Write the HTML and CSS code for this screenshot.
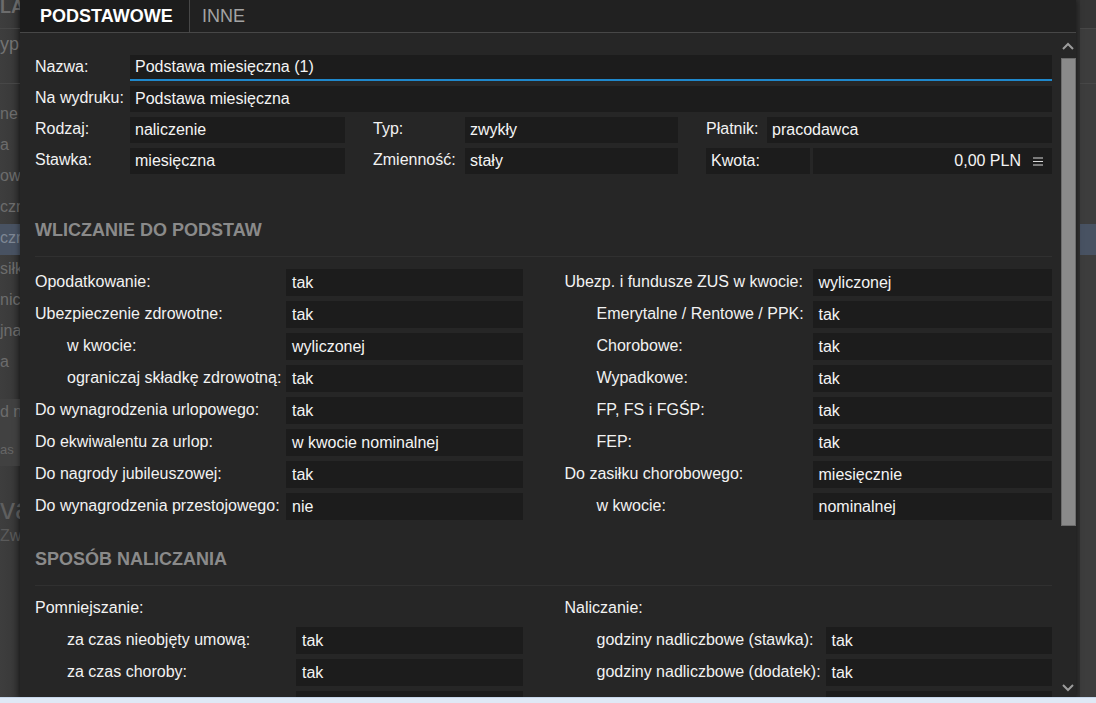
FILE: index.html
```html
<!DOCTYPE html>
<html lang="pl">
<head>
<meta charset="utf-8">
<title>Podstawa miesięczna</title>
<link rel="stylesheet" href="styles.css">
</head>
<body>
<div class="screen">
  <div class="main">
    <aside class="bg bg-left">
      <div class="b-head">LA</div>
      <div class="b-search">ypu</div>
      <div class="b-gap"></div>
      <div class="b-row">ne</div>
      <div class="b-row">a</div>
      <div class="b-row">owa</div>
      <div class="b-row">czn</div>
      <div class="b-row sel">czn</div>
      <div class="b-row">siłk</div>
      <div class="b-row">nic:</div>
      <div class="b-row">jna</div>
      <div class="b-row">a</div>
      <div class="b-gap2"></div>
      <div class="b-box"><div class="b-l1">d n</div><div class="b-l2">as</div></div>
      <div class="b-big">va</div>
      <div class="b-sub">Zw</div>
    </aside>

    <section class="dialog">
      <nav class="tabs">
        <div class="tab active">PODSTAWOWE</div>
        <div class="tab">INNE</div>
      </nav>
      <div class="body">
        <div class="content">
          <div class="top">
            <div class="frow">
              <span class="lbl l95">Nazwa:</span><span class="field focus">Podstawa miesięczna (1)</span>
            </div>
            <div class="frow">
              <span class="lbl l95">Na wydruku:</span><span class="field">Podstawa miesięczna</span>
            </div>
            <div class="trow">
              <div class="grp"><span class="lbl l95">Rodzaj:</span><span class="field">naliczenie</span></div>
              <div class="grp"><span class="lbl l92">Typ:</span><span class="field">zwykły</span></div>
              <div class="grp"><span class="lbl l61">Płatnik:</span><span class="field">pracodawca</span></div>
            </div>
            <div class="trow">
              <div class="grp"><span class="lbl l95">Stawka:</span><span class="field">miesięczna</span></div>
              <div class="grp"><span class="lbl l92">Zmienność:</span><span class="field">stały</span></div>
              <div class="grp kwota"><span class="field lblbox">Kwota:</span><span class="field amount">0,00 PLN<svg class="menu" width="10" height="9" viewBox="0 0 10 9"><path d="M0 1h10M0 4.5h10M0 8h10" stroke="#d8d8d8" stroke-width="1.2"/></svg></span></div>
            </div>
          </div>

          <h2 class="sec-head first">WLICZANIE DO PODSTAW</h2>
          <div class="cols s1">
            <div class="col left">
              <div class="srow"><span class="lbl">Opodatkowanie:</span><span class="field">tak</span></div>
              <div class="srow"><span class="lbl">Ubezpieczenie zdrowotne:</span><span class="field">tak</span></div>
              <div class="srow"><span class="lbl ind">w kwocie:</span><span class="field">wyliczonej</span></div>
              <div class="srow"><span class="lbl ind">ograniczaj składkę zdrowotną:</span><span class="field">tak</span></div>
              <div class="srow"><span class="lbl">Do wynagrodzenia urlopowego:</span><span class="field">tak</span></div>
              <div class="srow"><span class="lbl">Do ekwiwalentu za urlop:</span><span class="field">w kwocie nominalnej</span></div>
              <div class="srow"><span class="lbl">Do nagrody jubileuszowej:</span><span class="field">tak</span></div>
              <div class="srow"><span class="lbl">Do wynagrodzenia przestojowego:</span><span class="field">nie</span></div>
            </div>
            <div class="col right">
              <div class="srow"><span class="lbl">Ubezp. i fundusze ZUS w kwocie:</span><span class="field">wyliczonej</span></div>
              <div class="srow"><span class="lbl ind">Emerytalne / Rentowe / PPK:</span><span class="field">tak</span></div>
              <div class="srow"><span class="lbl ind">Chorobowe:</span><span class="field">tak</span></div>
              <div class="srow"><span class="lbl ind">Wypadkowe:</span><span class="field">tak</span></div>
              <div class="srow"><span class="lbl ind">FP, FS i FGŚP:</span><span class="field">tak</span></div>
              <div class="srow"><span class="lbl ind">FEP:</span><span class="field">tak</span></div>
              <div class="srow"><span class="lbl">Do zasiłku chorobowego:</span><span class="field">miesięcznie</span></div>
              <div class="srow"><span class="lbl ind">w kwocie:</span><span class="field">nominalnej</span></div>
            </div>
          </div>

          <h2 class="sec-head second">SPOSÓB NALICZANIA</h2>
          <div class="cols s2">
            <div class="col left">
              <div class="srow"><span class="lbl">Pomniejszanie:</span></div>
              <div class="srow"><span class="lbl ind">za czas nieobjęty umową:</span><span class="field">tak</span></div>
              <div class="srow"><span class="lbl ind">za czas choroby:</span><span class="field">tak</span></div>
              <div class="srow"><span class="lbl ind">za czas urlopu:</span><span class="field">tak</span></div>
            </div>
            <div class="col right">
              <div class="srow"><span class="lbl">Naliczanie:</span></div>
              <div class="srow"><span class="lbl ind">godziny nadliczbowe (stawka):</span><span class="field">tak</span></div>
              <div class="srow"><span class="lbl ind">godziny nadliczbowe (dodatek):</span><span class="field">tak</span></div>
              <div class="srow"><span class="lbl ind">godziny nocne:</span><span class="field">tak</span></div>
            </div>
          </div>
        </div>

        <div class="scrollbar">
          <div class="sb-btn up"><svg width="12" height="8" viewBox="0 0 12 8"><path d="M1 7L6 2l5 5" fill="none" stroke="#9c9c9c" stroke-width="2"/></svg></div>
          <div class="thumb"></div>
          <div class="sb-space"></div>
          <div class="sb-btn down"><svg width="12" height="8" viewBox="0 0 12 8"><path d="M1 1l5 5 5-5" fill="none" stroke="#9c9c9c" stroke-width="2"/></svg></div>
        </div>
      </div>
    </section>

    <aside class="bg bg-right">
      <div class="r-edge"></div>
      <div class="r-main">
        <div class="b-head"></div>
        <div class="b-search"></div>
        <div class="b-gap"></div>
        <div class="b-row"></div>
        <div class="b-row"></div>
        <div class="b-row"></div>
        <div class="b-row"></div>
        <div class="b-row sel"></div>
        <div class="b-row"></div>
        <div class="b-row"></div>
        <div class="b-row"></div>
        <div class="b-row"></div>
      </div>
    </aside>
  </div>
  <div class="taskbar"></div>
</div>
</body>
</html>
```

FILE: styles.css
```css
* { box-sizing: border-box; }
html, body { margin: 0; padding: 0; }
body {
  width: 1096px;
  height: 703px;
  overflow: hidden;
  background: #3a3a3a;
  font-family: "Liberation Sans", Arial, sans-serif;
  font-size: 16px;
  color: #f2f2f2;
}
.screen { display: flex; flex-direction: column; height: 703px; }
.main { display: flex; height: 697px; overflow: hidden; }
.taskbar { height: 6px; background: #dfe9f6; border-top: 1px solid #c6d6ea; }

/* background application peeking out */
.bg {
  flex: 0 0 20px;
  overflow: hidden;
  background: #3c3c3c;
  color: #6c6c6c;
  white-space: nowrap;
  font-size: 16px;
}
.bg-left { background: linear-gradient(to right, #3e3e3e 0, #3a3a3a 12px, #2e2e2e 20px); }
.b-head { height: 31px; line-height: 16px; font-weight: bold; font-size: 18px; border-bottom: 1px solid #474747; margin-top: -2px; padding-top: 1px; }
.b-search { height: 55px; line-height: 26px; padding-top: 2px; color: #737373; border-bottom: 1px solid #474747; font-size: 18px; }
.b-gap { height: 16px; }
.b-row { height: 31px; line-height: 28px; }
.b-row.sel { background: #485262; color: #7e8794; }
.b-gap2 { height: 20px; }
.b-box { height: 67px; background: #414141; padding-top: 4px; }
.b-l1 { line-height: 18px; }
.b-l2 { font-size: 13px; line-height: 18px; margin-top: 20px; color: #666; }
.b-big { font-size: 30px; line-height: 36px; margin-top: 25px; color: #5f5f5f; }
.b-sub { line-height: 18px; color: #5a5a5a; }

.bg-right { display: flex; background: #3d3d3d; }
.r-edge { flex: 0 0 4px; background: #303030; }
.r-main { flex: 1; }
.bg-right .b-head { background: #353535; }

/* dialog */
.dialog {
  flex: 0 0 1056px;
  display: flex;
  flex-direction: column;
  background: #262626;
  box-shadow: 0 0 6px rgba(0,0,0,.55);
  position: relative;
}
.tabs {
  height: 33px;
  display: flex;
  flex: none;
  background: #212121;
  border-bottom: 1px solid #474747;
}
.tab {
  font-size: 18px;
  line-height: 32px;
  color: #a3a3a3;
  padding: 0 12px;
}
.tab.active {
  width: 170px;
  padding-left: 20px;
  font-weight: bold;
  color: #ffffff;
  background: #1c1c1c;
  border-right: 1px solid #474747;
}
.body { flex: 1; display: flex; min-height: 0; }
.content { flex: 1; padding: 22px 8px 0 15px; overflow: hidden; }

.lbl { flex: none; white-space: nowrap; padding-bottom: 2px; }
.field {
  flex: 1;
  min-width: 0;
  height: 26px;
  background: #1c1c1c;
  padding: 0 5px;
  display: flex;
  align-items: center;
  white-space: nowrap;
  overflow: hidden;
  color: #f4f4f4;
}
.field.focus { border-bottom: 2px solid #1f88cc; }

.top { display: flex; flex-direction: column; gap: 5px; }
.frow { display: flex; align-items: center; height: 26px; }
.trow {
  display: grid;
  grid-template-columns: 310px 305px 1fr;
  column-gap: 28px;
  height: 26px;
}
.grp { display: flex; align-items: center; }
.l95 { width: 95px; }
.l92 { width: 92px; }
.l61 { width: 61px; }
.kwota { gap: 3px; }
.lblbox { flex: 0 0 104px; }
.amount { justify-content: flex-end; padding-right: 9px; }
.menu { margin-left: 12px; flex: none; }

.sec-head {
  margin: 45px 0 0;
  font-size: 18px;
  font-weight: bold;
  line-height: 22px;
  color: #8a8a8a;
  padding-bottom: 15px;
  border-bottom: 1px solid #303030;
}
.sec-head.second { margin-top: 28px; }
.cols {
  display: grid;
  grid-template-columns: 1fr 1fr;
  column-gap: 42px;
}
.cols.s1 { margin-top: 12px; }
.cols.s2 { margin-top: 9px; }
.col { display: flex; flex-direction: column; gap: 5px; }
.srow { display: flex; align-items: center; height: 27px; }
.srow .field { height: 27px; padding-left: 6px; }
.s1 .left .lbl { width: 251px; }
.s1 .right .lbl { width: 248px; }
.s2 .lbl { width: 261px; }
.ind { padding-left: 32px; }

/* scrollbar */
.scrollbar {
  flex: 0 0 16px;
  display: flex;
  flex-direction: column;
  align-items: center;
}
.sb-btn { height: 25px; display: flex; align-items: center; justify-content: center; width: 16px; }
.sb-btn.down { height: 17px; align-items: flex-start; padding-top: 4px; }
.thumb {
  width: 15px;
  margin-left: 1px;
  height: 468px;
  background: #8a8a8a;
  border: 1px solid #6c6c6c;
}
.sb-space { flex: 1; }
```
